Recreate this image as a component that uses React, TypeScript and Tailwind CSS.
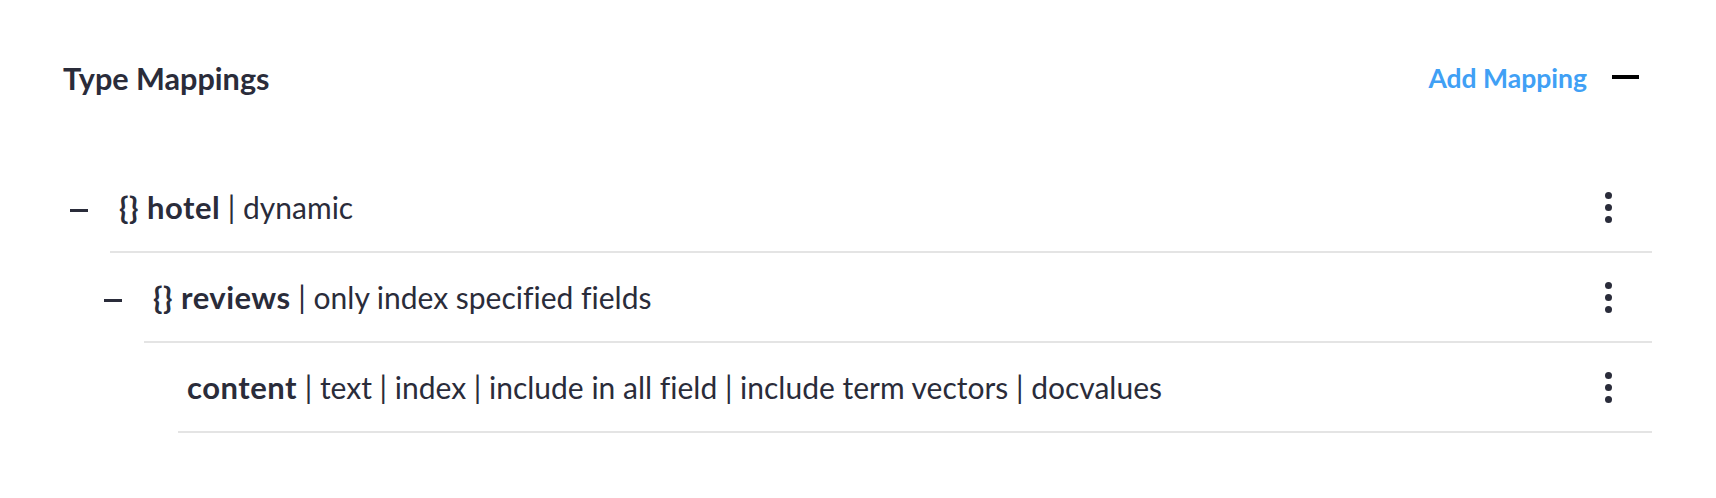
import React from "react";

type Node = {
  name: string;
  obj?: boolean;
  rest: string[];
  children?: Node[];
};

const tree: Node = {
  name: "hotel",
  obj: true,
  rest: ["dynamic"],
  children: [
    {
      name: "reviews",
      obj: true,
      rest: ["only index specified fields"],
      children: [
        {
          name: "content",
          rest: ["text", "index", "include in all field", "include term vectors", "docvalues"],
        },
      ],
    },
  ],
};

function Kebab() {
  return (
    <div className="flex flex-col gap-[5px]">
      <span className="block w-[7px] h-[7px] rounded-full bg-[#2a2c3a]" />
      <span className="block w-[7px] h-[7px] rounded-full bg-[#2a2c3a]" />
      <span className="block w-[7px] h-[7px] rounded-full bg-[#2a2c3a]" />
    </div>
  );
}

function TreeNode({ node }: { node: Node }) {
  const hasChildren = !!node.children && node.children.length > 0;
  return (
    <div>
      <div className="flex h-[90px]">
        <div className="w-[42px] flex items-center">
          {hasChildren && <div className="w-[18px] h-[3px] ml-[2px] mt-[4px] bg-[#2a2c3a]" />}
        </div>
        <div className="flex-1 flex items-center justify-between border-b-2 border-[#e4e4e4] pl-[9px] pr-[40px]">
          <div className="text-[30px] leading-[38px] text-[#2a2c3a] whitespace-pre [font-variant-ligatures:none]">
            {node.obj && <span className="font-bold text-[31px] tracking-[0.5px]">{"{} "}</span>}
            <span className="font-bold text-[31px] tracking-[0.5px]">{node.name}</span>
            {node.rest.map((r, i) => (
              <span key={i}>{" | " + r}</span>
            ))}
          </div>
          <Kebab />
        </div>
      </div>
      {hasChildren && (
        <div className="ml-[34px]">
          {node.children!.map((c, i) => (
            <TreeNode key={i} node={c} />
          ))}
        </div>
      )}
    </div>
  );
}

export default function App() {
  return (
    <div className="w-[1716px] h-[498px] bg-white pl-[68px] pr-[64px] pt-[51px] [font-family:'Lato',sans-serif]">
      <div className="flex items-center justify-between h-[56px] pr-[13px]">
        <div className="ml-[-5px] text-[30.6px] font-bold text-[#2a2c3a]">Type Mappings</div>
        <div className="flex items-center gap-[25px]">
          <span className="text-[26.5px] font-bold text-[#40a0f5]">Add Mapping</span>
          <div className="w-[27px] h-[4px] bg-black mt-[-4px]" />
        </div>
      </div>
      <div className="mt-[56px]">
        <TreeNode node={tree} />
      </div>
    </div>
  );
}
